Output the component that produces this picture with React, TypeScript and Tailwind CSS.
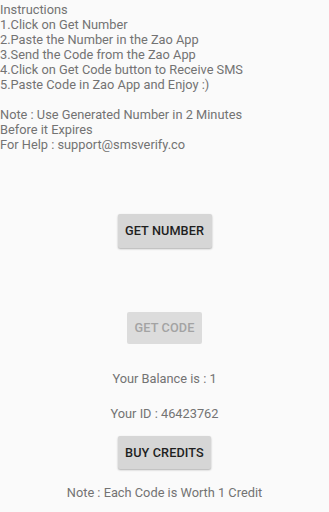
import React from "react";

export default function App() {
  const lines = [
    "Instructions",
    "1.Click on Get Number",
    "2.Paste the Number in the Zao App",
    "3.Send the Code from the Zao App",
    "4.Click on Get Code button to Receive SMS",
    "5.Paste Code in Zao App and Enjoy :)",
    "\u00a0",
    "Note : Use Generated Number in 2 Minutes",
    "Before it Expires",
    "For Help : support@smsverify.co",
  ];
  return (
    <div
      className="w-[329px] h-[512px] bg-[#fafafa] flex flex-col overflow-hidden"
      style={{ fontFamily: "Roboto, 'Noto Sans', sans-serif" }}
    >
      <div className="flex flex-col text-[12.8px] leading-[15px] text-[#737373] pt-[1.5px]">
        {lines.map((l, i) => (
          <div key={i} className="whitespace-nowrap">{l}</div>
        ))}
      </div>
      <div className="flex flex-col items-center">
        <button className="mt-[62.5px] w-[94px] h-[34px] bg-[#d6d6d6] rounded-[2px] shadow-[0_1px_2px_rgba(0,0,0,0.3)] text-[12.7px] font-medium text-[#1f1f1f] tracking-[0.1px]">
          GET NUMBER
        </button>
        <button className="mt-[64px] w-[75px] h-[32px] bg-[#dcdcdc] rounded-[2px] text-[12.7px] font-medium text-[#a3a3a3] tracking-[0.1px]">
          GET CODE
        </button>
        <div className="mt-[26px] h-[17px] leading-[17px] text-[12.8px] text-[#737373]">Your Balance is : 1</div>
        <div className="mt-[18px] h-[17px] leading-[17px] text-[12.8px] text-[#737373]">Your ID : 46423762</div>
        <button className="mt-[14px] w-[93px] h-[33px] bg-[#d6d6d6] rounded-[2px] shadow-[0_1px_2px_rgba(0,0,0,0.3)] text-[12.7px] font-medium text-[#1f1f1f] tracking-[0.1px]">
          BUY CREDITS
        </button>
        <div className="mt-[15px] h-[17px] leading-[17px] text-[12.8px] text-[#737373]">Note : Each Code is Worth 1 Credit</div>
      </div>
    </div>
  );
}
